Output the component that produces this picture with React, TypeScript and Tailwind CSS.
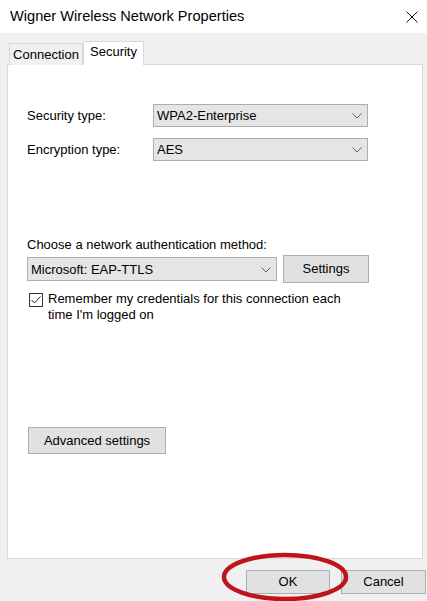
const FONT = "font-['Liberation_Sans',Arial,sans-serif]"

function Chevron() {
  return (
    <svg width="10" height="6" viewBox="0 0 10 6" className="shrink-0">
      <path d="M0.5 0.5 L5 5 L9.5 0.5" fill="none" stroke="#606060" strokeWidth="1" />
    </svg>
  )
}

function Select({ value, className }: { value: string; className: string }) {
  return (
    <div
      className={`flex items-center justify-between border border-[#adadad] bg-[#e5e5e5] pl-[3px] pr-[5px] pt-px text-[13px] text-black ${className}`}
    >
      <span>{value}</span>
      <Chevron />
    </div>
  )
}

function Button({ label, className }: { label: string; className: string }) {
  return (
    <div
      className={`flex items-center justify-center border border-[#adadad] bg-[#e1e1e1] text-[13px] text-black ${className}`}
    >
      {label}
    </div>
  )
}

export default function App() {
  return (
    <div className={`relative h-[601px] w-[427px] overflow-hidden bg-[#f0f0f0] ${FONT}`}>
      {/* Title bar */}
      <div className="flex h-[33px] items-center justify-between bg-white pl-[10px] pr-[9px]">
        <span className="text-[14.6px] text-black">Wigner Wireless Network Properties</span>
        <svg width="12" height="12" viewBox="0 0 12 12">
          <path d="M0.5 0.5 L11.5 11.5 M11.5 0.5 L0.5 11.5" stroke="#111" strokeWidth="1" />
        </svg>
      </div>

      {/* Tabs */}
      <div className="mt-[8px] flex items-end pl-[9px]">
        <div className="-mb-px flex h-[22px] w-[74px] items-center justify-center border border-b-0 border-[#d9d9d9] bg-[#f0f0f0] text-[13px] text-black">
          Connection
        </div>
        <div className="relative z-10 -mb-px flex h-[24px] w-[61px] items-center justify-center border border-b-0 border-[#d9d9d9] bg-white pb-[3px] text-[13px] text-black">
          Security
        </div>
      </div>

      {/* Panel */}
      <div className="ml-[7px] h-[495px] w-[416px] border border-[#d9d9d9] bg-white pt-[39px] pl-[19px]">
        <div className="flex h-[23px] items-center">
          <span className="w-[126px] pt-px text-[13px] text-black">Security type:</span>
          <Select value="WPA2-Enterprise" className="h-[23px] w-[215px]" />
        </div>
        <div className="mt-[11px] flex h-[23px] items-center">
          <span className="w-[126px] pt-px text-[13px] text-black">Encryption type:</span>
          <Select value="AES" className="h-[23px] w-[215px]" />
        </div>

        <div className="mt-[76px] text-[13px] leading-[16px] text-black">
          Choose a network authentication method:
        </div>
        <div className="mt-[2px] flex items-center">
          <Select value="Microsoft: EAP-TTLS" className="h-[24px] w-[250px]" />
          <Button label="Settings" className="ml-[6px] h-[28px] w-[86px]" />
        </div>

        <div className="mt-[8px] flex items-start pl-[2px]">
          <div className="mt-[2px] flex h-[14px] w-[14px] shrink-0 items-center justify-center border border-[#333] bg-white">
            <svg width="10" height="8" viewBox="0 0 10 8">
              <path d="M0.5 4 L3.5 7 L9.5 0.5" fill="none" stroke="#222" strokeWidth="1" />
            </svg>
          </div>
          <div className="ml-[5px] w-[300px] text-[13px] leading-[16px] text-black">
            Remember my credentials for this connection each time I'm logged on
          </div>
        </div>

        <Button label="Advanced settings" className="ml-[1px] mt-[104px] h-[27px] w-[138px]" />
      </div>

      {/* Footer buttons */}
      <div className="mt-[11px] flex pl-[246px]">
        <Button label="OK" className="h-[24px] w-[84px] border-[#0078d7]" />
        <Button label="Cancel" className="ml-[11px] h-[24px] w-[85px]" />
      </div>

      {/* Red annotation ellipse */}
      <svg className="absolute left-[221px] top-[552px]" width="130" height="50" viewBox="0 0 130 50">
        <ellipse cx="64" cy="25" rx="61" ry="22" fill="none" stroke="#c0141c" strokeWidth="4.5" />
      </svg>
    </div>
  )
}
